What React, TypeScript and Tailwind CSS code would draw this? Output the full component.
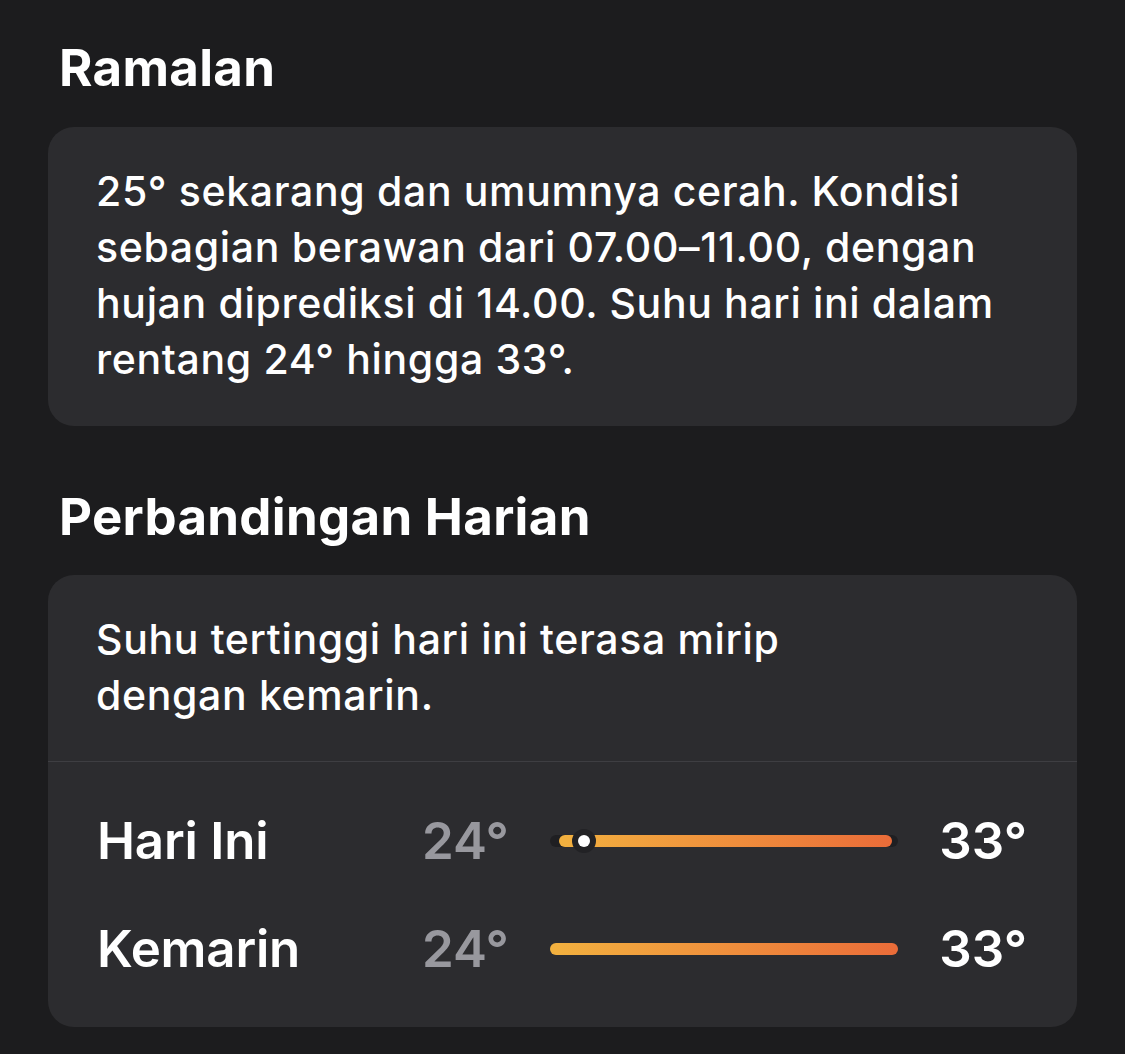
const rows = [
  { label: "Hari Ini", low: "24°", high: "33°", today: true },
  { label: "Kemarin", low: "24°", high: "33°", today: false },
];

function RangeBar({ today }: { today: boolean }) {
  if (!today) {
    return (
      <div className="h-[12px] w-full rounded-full bg-gradient-to-r from-[#f2b13f] to-[#ea6c39]" />
    );
  }
  return (
    <div className="relative h-[12px] w-full rounded-full bg-[#1f1f22]">
      <div className="absolute top-0 bottom-0 left-[9px] right-[6px] rounded-full bg-gradient-to-r from-[#f2b13f] to-[#ea6c39]" />
      {/* current temperature marker */}
      <div className="absolute top-1/2 left-[22px] h-[24px] w-[24px] -translate-y-1/2 rounded-full bg-[#222225] flex items-center justify-center">
        <div className="h-[12px] w-[12px] rounded-full bg-white" />
      </div>
    </div>
  );
}

export default function App() {
  return (
    <div
      className="min-h-screen bg-[#1c1c1e] px-12 pt-[38px] pb-[27px] text-white"
      style={{ fontFamily: "Inter, 'Noto Sans', sans-serif" }}
    >
      <h2 className="pl-[11px] text-[51px] font-bold leading-[60px] tracking-[0.3px]">Ramalan</h2>

      <div className="mt-[29px] rounded-[26px] bg-[#2c2c2f] pl-[48px] pr-[30px] pt-[36px] pb-[39px]">
        <p className="whitespace-nowrap text-[41px] font-medium leading-[56px] tracking-[0.65px]">
          25° sekarang dan umumnya cerah. Kondisi
          <br />
          sebagian berawan dari 07.00–11.00, dengan
          <br />
          hujan diprediksi di 14.00. Suhu hari ini dalam
          <br />
          rentang 24° hingga 33°.
        </p>
      </div>

      <h2 className="mt-[61px] pl-[11px] text-[51px] font-bold leading-[60px] tracking-[0.3px]">
        Perbandingan Harian
      </h2>

      <div className="mt-[28px] rounded-[26px] bg-[#2c2c2f]">
        <div className="pl-[48px] pr-[30px] pt-[36px] pb-[38px]">
          <p className="whitespace-nowrap text-[41px] font-medium leading-[56px] tracking-[0.65px]">
            Suhu tertinggi hari ini terasa mirip
            <br />
            dengan kemarin.
          </p>
        </div>
        <div className="h-px bg-[#3e3e42]" />
        <div className="pl-[49px] pr-[50px] pt-[25px] pb-[24px]">
          {rows.map((r) => (
            <div key={r.label} className="flex h-[108px] items-center">
              <div className="w-[325px] text-[51px] font-semibold tracking-[-0.2px]">{r.label}</div>
              <div className="w-[128px] text-[51px] font-semibold text-[#98989e]">{r.low}</div>
              <div className="flex-1">
                <RangeBar today={r.today} />
              </div>
              <div className="w-[129px] text-right text-[51px] font-semibold">{r.high}</div>
            </div>
          ))}
        </div>
      </div>
    </div>
  );
}
